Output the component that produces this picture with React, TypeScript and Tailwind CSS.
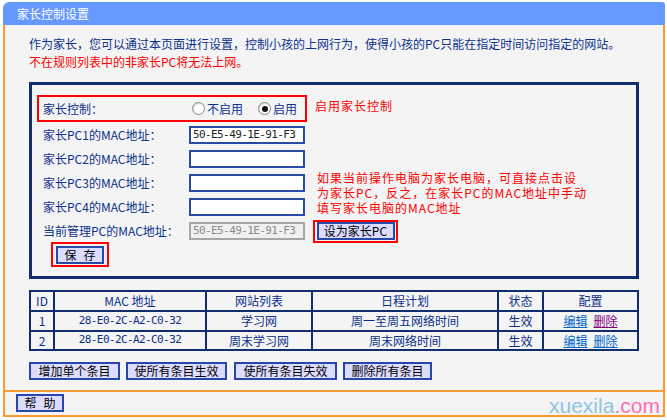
import React from "react";

const CJK = "font-['Noto_Sans_CJK_SC','Noto_Sans',sans-serif]";
const MONO = "font-['DejaVu_Sans_Mono','Liberation_Mono',monospace]";

function Radio({ checked }: { checked?: boolean }) {
  return (
    <span className="w-[13px] h-[13px] rounded-full border border-[#858585] bg-white flex items-center justify-center shadow-[inset_1px_1px_1px_rgba(0,0,0,0.15)]">
      {checked && <span className="w-[6px] h-[6px] rounded-full bg-[#111]" />}
    </span>
  );
}

function MacInput({ value, disabled }: { value?: string; disabled?: boolean }) {
  return (
    <div
      className={`w-[116px] h-[18px] border-2 flex items-center pl-[2px] ${MONO} text-[11px] tracking-[-0.6px] ${
        disabled
          ? "border-[#a6a6a6] bg-[#f0f0f0] text-[#8a8a8a]"
          : "border-[#2a4aa5] bg-white text-[#222]"
      }`}
    >
      {value}
    </div>
  );
}

function Btn({ children, w }: { children: React.ReactNode; w: string }) {
  return (
    <div
      className={`${w} h-[18px] border-2 border-[#2947aa] bg-[#dcdcff] text-black text-[12px] leading-none flex items-center justify-center gap-[7px]`}
    >
      {children}
    </div>
  );
}

const rows = [
  { id: "1", mac: "28-E0-2C-A2-C0-32", site: "学习网", plan: "周一至周五网络时间", st: "生效", visited: true },
  { id: "2", mac: "28-E0-2C-A2-C0-32", site: "周末学习网", plan: "周末网络时间", st: "生效", visited: false },
];

export default function App() {
  const label = "pl-[6px] flex items-center text-[12px] text-[#0b318f]";
  return (
    <div className={`w-[667px] h-[420px] bg-white relative overflow-hidden ${CJK}`}>
      <div className="ml-[3px] w-[662px]">
        {/* header */}
        <div className="mt-[2px] h-[23px] bg-[#6699ff] rounded-tl-[6px] rounded-tr-[3px] flex items-center pl-[14px] text-white text-[12px]">
          家长控制设置
        </div>

        {/* body */}
        <div className="h-[365px] bg-[#f4f4f4] border-x-2 border-[#ff9933] flex flex-col">
          <div className="pt-[10px] pl-[24px] text-[12px] leading-[18px]">
            <div className="text-[#0b318f]">
              作为家长，您可以通过本页面进行设置，控制小孩的上网行为，使得小孩的PC只能在指定时间访问指定的网站。
            </div>
            <div className="text-[#ff0000]">不在规则列表中的非家长PC将无法上网。</div>
          </div>

          {/* framed box */}
          <div className="mt-[11px] ml-[24px] w-[610px] h-[197px] border-[3px] border-[#112d6e] flex flex-col">
            <div className="mt-[10px] ml-[5px] flex items-start">
              <div className="w-[270px] h-[27px] border-2 border-[#ff0000] flex items-center">
                <span className="ml-[4px] w-[149px] text-[12px] text-[#0b318f]">家长控制：</span>
                <Radio />
                <span className="ml-[2px] text-[12px] text-[#0b318f]">不启用</span>
                <span className="ml-[15px]">
                  <Radio checked />
                </span>
                <span className="ml-[2px] text-[12px] text-[#0b318f]">启用</span>
              </div>
              <span className="ml-[8px] mt-[3px] text-[12px] tracking-[1px] leading-[16px] text-[#ff0000]">启用家长控制</span>
            </div>

            <div className="mt-[1px] ml-[5px] grid grid-cols-[152px_116px_1fr] grid-rows-[24px_24px_24px_24px_24px]">
              <div className={label}>家长PC1的MAC地址：</div>
              <div className="flex items-center">
                <MacInput value="50-E5-49-1E-91-F3" />
              </div>
              <div />
              <div className={label}>家长PC2的MAC地址：</div>
              <div className="flex items-center">
                <MacInput />
              </div>
              <div />
              <div className={label}>家长PC3的MAC地址：</div>
              <div className="flex items-center">
                <MacInput />
              </div>
              <div className="row-span-2 pl-[12px] -mt-[1px] text-[12px] tracking-[1px] leading-[15px] text-[#ff0000]">
                <div>如果当前操作电脑为家长电脑，可直接点击设</div>
                <div>为家长PC，反之，在家长PC的MAC地址中手动</div>
                <div>填写家长电脑的MAC地址</div>
              </div>
              <div className={label}>家长PC4的MAC地址：</div>
              <div className="flex items-center">
                <MacInput />
              </div>
              <div className={label}>当前管理PC的MAC地址：</div>
              <div className="flex items-center">
                <MacInput value="50-E5-49-1E-91-F3" disabled />
              </div>
              <div className="flex items-center pl-[8px]">
                <div className="w-[85px] h-[23px] border-2 border-[#ff0000] flex items-center justify-center">
                  <Btn w="w-[78px]">设为家长PC</Btn>
                </div>
              </div>
            </div>

            <div className="ml-[19px] -mt-[1px] w-[58px] h-[25px] border-2 border-[#ff0000] flex items-center justify-center">
              <Btn w="w-[48px]">
                <span>保</span>
                <span>存</span>
              </Btn>
            </div>
          </div>

          {/* table */}
          <div className="mt-[11px] ml-[24px] w-[610px] bg-[#112d6e] p-[2px] grid grid-cols-[22px_150px_104px_184px_43px_93px] grid-rows-[18px_18px_17px] gap-[2px] text-[12px] text-[#0b2f8a]">
            {["ID", "MAC 地址", "网站列表", "日程计划", "状态", "配置"].map((h) => (
              <div key={h} className="bg-[#f4f4f4] flex items-center justify-center whitespace-pre">
                {h}
              </div>
            ))}
            {rows.map((r) => (
              <React.Fragment key={r.id}>
                <div className="bg-[#f4f4f4] flex items-center justify-center">{r.id}</div>
                <div className={`bg-[#f4f4f4] flex items-center justify-center ${MONO} text-[11px] tracking-[-0.6px]`}>
                  {r.mac}
                </div>
                <div className="bg-[#f4f4f4] flex items-center justify-center">{r.site}</div>
                <div className="bg-[#f4f4f4] flex items-center justify-center">{r.plan}</div>
                <div className="bg-[#f4f4f4] flex items-center justify-center">{r.st}</div>
                <div className="bg-[#f4f4f4] flex items-center justify-center gap-[6px]">
                  <span className="text-[#0066cc] underline">编辑</span>
                  <span className={`${r.visited ? "text-[#800080]" : "text-[#0066cc]"} underline`}>删除</span>
                </div>
              </React.Fragment>
            ))}
          </div>

          {/* action buttons */}
          <div className="mt-[11px] ml-[24px] flex">
            <Btn w="w-[91px]">增加单个条目</Btn>
            <div className="ml-[6px]">
              <Btn w="w-[101px]">使所有条目生效</Btn>
            </div>
            <div className="ml-[7px]">
              <Btn w="w-[103px]">使所有条目失效</Btn>
            </div>
            <div className="ml-[6px]">
              <Btn w="w-[89px]">删除所有条目</Btn>
            </div>
          </div>
        </div>

        {/* help */}
        <div className="h-[27px] bg-[#f4f4f4] border-2 border-[#ff9933] pt-[2px] pl-[11px]">
          <Btn w="w-[48px]">
            <span>帮</span>
            <span>助</span>
          </Btn>
        </div>
      </div>

      <div className="absolute left-[549px] top-[395px] font-['Liberation_Sans',Arial,sans-serif] text-[21px] leading-[21px]">
        <span className="text-[#8ec4e6]">xuexila</span>
        <span className="text-[#ff6eb4]">.com</span>
      </div>
    </div>
  );
}
